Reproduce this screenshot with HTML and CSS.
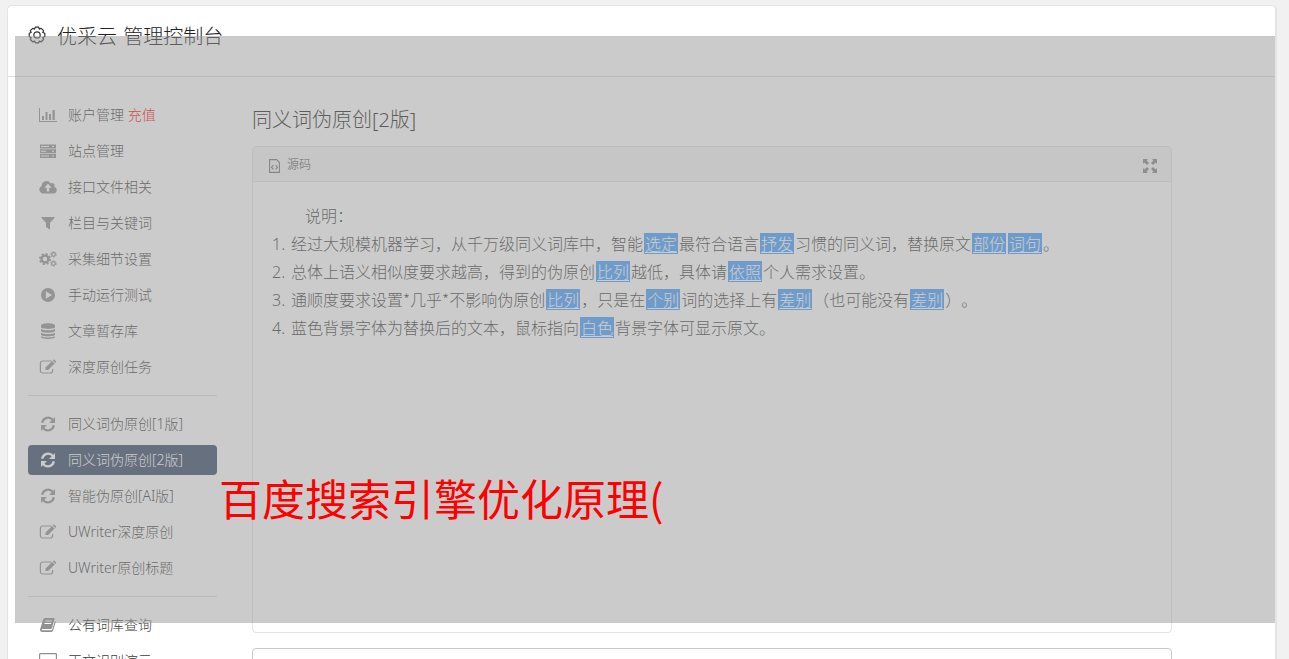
FILE: index.html
```
<!DOCTYPE html>
<html lang="zh-CN">
<head>
    <meta charset="UTF-8">
    <meta name="viewport" content="width=device-width, initial-scale=1.0">
    <title>优采云 管理控制台</title>
    <link rel="stylesheet" href="styles.css">
</head>
<body>

    <!-- shared icons -->
    <svg class="icon-defs">
        <symbol id="i-refresh" viewBox="0 0 16 16">
            <path d="M2.2 6.8A6 6 0 0 1 12.8 4M13.8 9.2A6 6 0 0 1 3.2 12" fill="none" stroke="currentColor" stroke-width="2.3"/>
            <path d="M15 1v6H9zM1 15V9h6z"/>
        </symbol>
        <symbol id="i-edit" viewBox="0 0 18 16">
            <path d="M12.5 2H3.6A2.2 2.2 0 0 0 1.4 4.200v7.600A2.200 2.200 0 0 0 3.600 14h7.800a2.200 2.200 0 0 0 2.200-2.200V10" fill="none" stroke="currentColor" stroke-width="1.200"/>
            <path d="M6.500 8.500l6.600-6.600 2.600 2.600-6.600 6.600H6.500zM13.800 1.200l.6-.5q.6-.4 1.100.1l1.400 1.400q.5.500 0 1.100l-.6.600z"/>
        </symbol>
    </svg>

    <div class="wrapper">
        <div class="header">
            <svg class="logo" viewBox="0 0 20 20">
                <path d="M8.300 1.200h3.400l.6 1.900 1.900-.8 2.400 2.400-.9 1.800 2.100.8v3.400l-2.100.8.9 2-2.400 2.400-1.900-.9-.6 1.900H8.300L7.600 15l-1.900.9-2.400-2.400.9-2-2-.8V7.300l2-.8-.9-1.800 2.400-2.400 1.900.8z"/>
                <circle cx="10" cy="9" r="3.200"/>
            </svg>
            <h1>优采云 管理控制台</h1>
        </div>

        <div class="main">
            <div class="sidebar">
                <a class="item" href="#">
                    <svg class="icon" viewBox="0 0 18 16"><path d="M0 1h1v13h17v1H0zM3 9h2v4H3zM6.500 5h2v8h-2zM10 7h2v6h-2zM13.500 3h2.300v10h-2.300z"/></svg>
                    <span>账户管理 <b>充值</b></span>
                </a>
                <a class="item" href="#">
                    <svg class="icon" viewBox="0 0 18 16"><path fill-rule="evenodd" d="M1 1.500h16v4H1zM2 3v1h8V3zM13 3v1h2V3zM1 6.300h16v4H1zM2 7.800v1h5v-1zM13 7.800v1h2v-1zM1 11.100h16v4H1zM2 12.600v1h8v-1zM13 12.600v1h2v-1z"/></svg>
                    <span>站点管理</span>
                </a>
                <a class="item" href="#">
                    <svg class="icon" viewBox="0 0 18 16"><path fill-rule="evenodd" d="M4.300 14.500A4 4 0 0 1 2.600 6.900 4.900 4.900 0 0 1 11.700 4.500 2.600 2.600 0 0 1 15.400 7.700 3.500 3.500 0 0 1 14.300 14.500zM9 4.800L5.300 8.700h2.500v3.700h2.400V8.700h2.500z"/></svg>
                    <span>接口文件相关</span>
                </a>
                <a class="item" href="#">
                    <svg class="icon" viewBox="0 0 18 16"><path d="M2.700 2h12.600q.8.200.2 1L11 7.800V14.700L7 12V7.800L2.500 3q-.6-.8.200-1z"/></svg>
                    <span>栏目与关键词</span>
                </a>
                <a class="item" href="#">
                    <svg class="icon" viewBox="0 0 18 16">
                        <g fill="none" stroke="currentColor">
                            <circle cx="6" cy="8" r="3.400" stroke-width="2.400"/>
                            <circle cx="6" cy="8" r="5.100" stroke-width="1.800" stroke-dasharray="2.100 1.905"/>
                            <circle cx="14.500" cy="3.500" r="1.800" stroke-width="1.200"/>
                            <circle cx="14.500" cy="3.500" r="2.700" stroke-width="1" stroke-dasharray="1.400 1.427"/>
                            <circle cx="14.500" cy="12.500" r="1.800" stroke-width="1.200"/>
                            <circle cx="14.500" cy="12.500" r="2.700" stroke-width="1" stroke-dasharray="1.400 1.427"/>
                        </g>
                    </svg>
                    <span>采集细节设置</span>
                </a>
                <a class="item" href="#">
                    <svg class="icon" viewBox="0 0 18 16"><path fill-rule="evenodd" d="M9 1a7 7 0 1 1 0 14A7 7 0 1 1 9 1zM6.800 4.300v7.400L13 8z"/></svg>
                    <span>手动运行测试</span>
                </a>
                <a class="item" href="#">
                    <svg class="icon" viewBox="0 0 18 16"><path d="M2 2.500C2-.5 16-.5 16 2.500V4C16 6.500 2 6.500 2 4zM2 6c2.500 1.800 11.500 1.800 14 0v2C15 10.200 3 10.200 2 8zM2 9.700c2.500 1.800 11.500 1.800 14 0v2c-1 2.200-13 2.200-14 0zM2 13.200c2.500 1.600 11.500 1.600 14 0v1c-1 2.300-13 2.300-14 0z"/></svg>
                    <span>文章暂存库</span>
                </a>
                <a class="item" href="#">
                    <svg class="icon"><use href="#i-edit"/></svg>
                    <span>深度原创任务</span>
                </a>
                <div class="divider"></div>
                <a class="item" href="#">
                    <svg class="icon"><use href="#i-refresh"/></svg>
                    <span>同义词伪原创[1版]</span>
                </a>
                <a class="item active" href="#">
                    <svg class="icon"><use href="#i-refresh"/></svg>
                    <span>同义词伪原创[2版]</span>
                </a>
                <a class="item" href="#">
                    <svg class="icon"><use href="#i-refresh"/></svg>
                    <span>智能伪原创[AI版]</span>
                </a>
                <a class="item" href="#">
                    <svg class="icon"><use href="#i-edit"/></svg>
                    <span>UWriter深度原创</span>
                </a>
                <a class="item" href="#">
                    <svg class="icon"><use href="#i-edit"/></svg>
                    <span>UWriter原创标题</span>
                </a>
                <div class="divider"></div>
                <a class="item" href="#">
                    <svg class="icon" viewBox="0 0 18 16"><path fill-rule="evenodd" d="M6 1h8.500q1.300 0 1 1.200L13 11q-.3 1-1.400 1H3.500q-1 .1-.8.800.2.500 1 .5h8.500q.8 0 1-.8L16 4q.9.400.6 1.400l-2.500 8.200q-.4 1.400-1.700 1.400H3.500Q1 15 1 12.500L4 2.700Q4.500 1 6 1zM6.500 3.500l-.3 1h6.600l.3-1zM5.700 6l-.3 1H12l.3-1z"/></svg>
                    <span>公有词库查询</span>
                </a>
                <a class="item" href="#">
                    <svg class="icon" viewBox="0 0 18 16"><path d="M1.500 .700h15a1 1 0 0 1 1 1v10H.500v-10a1 1 0 0 1 1-1zM7 12v2.500h4V12" fill="none" stroke="currentColor" stroke-width="1.300"/></svg>
                    <span>正文识别演示</span>
                </a>
            </div>

            <div class="content">
                <h2>同义词伪原创[2版]</h2>
                <div class="panel">
                    <div class="panel-head">
                        <svg class="source-icon" viewBox="0 0 11 14">
                            <path d="M.6.600h7l2.800 2.900v9.900H.6zM4.500 6L2.500 8.200l2 2.200M6.500 6l2 2.200-2 2.200"/>
                        </svg>
                        <span>源码</span>
                        <svg class="expand-icon" viewBox="0 0 14 14"><path d="M0 0h5L3.600 1.400 6 3.900 3.900 6 1.400 3.600 0 5zM14 0v5l-1.400-1.400L10.100 6 8 3.900l2.400-2.500L9 0zM0 14V9l1.400 1.400L3.900 8 6 10.100l-2.400 2.500L5 14zM14 14H9l1.400-1.400L8 10.100 10.100 8l2.500 2.400L14 9z"/></svg>
                    </div>
                    <div class="editor">
                        <p class="intro">说明：</p>
                        <p><i>1.</i>经过大规模机器学习，从千万级同义词库中，智能<u>选定</u>最符合语言<u>抒发</u>习惯的同义词，替换原文<u>部份</u><u>词句</u>。</p>
                        <p><i>2.</i>总体上语义相似度要求越高，得到的伪原创<u>比列</u>越低，具体请<u>依照</u>个人需求设置。</p>
                        <p><i>3.</i>通顺度要求设置*几乎*不影响伪原创<u>比列</u>，只是在<u>个别</u>词的选择上有<u>差别</u>（也可能没有<u>差别</u>）。</p>
                        <p><i>4.</i>蓝色背景字体为替换后的文本，鼠标指向<u>白色</u>背景字体可显示原文。</p>
                    </div>
                </div>
                <div class="next-box"></div>
            </div>
        </div>
    </div>

    <div class="mask"></div>
    <div class="caption">百度搜索引擎优化原理(</div>

</body>
</html>
```

FILE: styles.css
```
* {
    box-sizing: border-box;
}

body {
    margin: 0;
    height: 659px;
    padding: 5px 12px 0 7px;
    overflow: hidden;
    background-color: #f1f1f1;
    font-family: "Noto Sans", "Noto Sans CJK SC", sans-serif;
    font-weight: 300;
    font-size: 14px;
    color: #3c3c3c;
    text-spacing-trim: space-all;
}

.icon-defs {
    display: none;
}

.wrapper {
    height: 654px;
    overflow: hidden;
    background-color: #fff;
    border: 1px solid #e4e4e4;
    border-right-width: 2px;
    border-bottom: none;
    border-radius: 5px 5px 0 0;
}

.header {
    height: 71px;
    display: flex;
    align-items: flex-start;
    padding: 15px 0 0 19px;
    border-bottom: 1px solid #ddd;
    color: #333;
}

.logo {
    width: 20px;
    height: 20px;
    margin: 5px 10px 0 0;
    fill: none;
    stroke: #333;
    stroke-width: 1.2;
    stroke-linejoin: round;
}

.header h1 {
    margin: 0;
    font-size: 20px;
    line-height: 32px;
    font-weight: 300;
    word-spacing: 1px;
    color: #222;
}

.main {
    display: flex;
    gap: 35px;
    padding-left: 20px;
}

.sidebar {
    width: 189px;
    padding-top: 23px;
}

.item {
    display: flex;
    align-items: center;
    height: 30px;
    margin-bottom: 6px;
    padding-left: 11px;
    border-radius: 4px;
    line-height: 20px;
    color: #3c3c3c;
    text-decoration: none;
    white-space: nowrap;
}

.item b {
    font-weight: 300;
    color: #f00;
}

.item.active,
.item.active .icon {
    color: #fff;
}

.item.active {
    background-color: #354967;
}

.icon {
    width: 18px;
    height: 16px;
    margin-right: 11px;
    color: #919191;
    fill: currentColor;
}

.divider {
    height: 1px;
    margin: 13px 0;
    background-color: #ddd;
}

.content {
    width: 920px;
    padding-top: 27px;
}

.content h2 {
    margin: 0;
    height: 42px;
    font-size: 20px;
    line-height: 32px;
    font-weight: 300;
    color: #222;
}

.panel {
    height: 487px;
    border: 1px solid #e3e3e3;
    border-radius: 4px;
}

.panel-head {
    display: flex;
    align-items: center;
    height: 35px;
    padding: 0 14px 0 16px;
    background-color: #f5f5f5;
    border-bottom: 1px solid #e3e3e3;
    font-size: 12px;
    line-height: 18px;
}

.panel-head span {
    padding-top: 2px;
}

.source-icon {
    width: 11px;
    height: 14px;
    margin: 4px 7px 0 0;
    fill: none;
    stroke: #757575;
    stroke-width: 1.1;
}

.expand-icon {
    width: 14px;
    height: 14px;
    margin: 4px 0 0 auto;
    fill: #858585;
}

.editor {
    padding: 19px 19px;
    font-family: "Noto Sans CJK SC", sans-serif;
    font-size: 16px;
    line-height: 28px;
    white-space: nowrap;
}

.editor p {
    display: flow-root;
    height: 28px;
    margin: 0;
}

.editor .intro {
    padding-left: 33px;
}

.editor i {
    display: inline-block;
    width: 19px;
    font-family: "Noto Sans", sans-serif;
    font-style: normal;
    line-height: 20px;
}

/* replaced words */
.editor u {
    display: inline-block;
    height: 21px;
    margin: 0 1px;
    padding: 0 1px;
    line-height: 21px;
    background-color: #479ffd;
    color: #fff;
    text-underline-offset: 2px;
    text-decoration-thickness: 1px;
}

.next-box {
    height: 60px;
    margin-top: 15px;
    border: 1px solid #c8c8c8;
    border-radius: 4px;
}

/* translucent layer over the page */
.mask {
    position: absolute;
    left: 15px;
    top: 36px;
    width: 1260px;
    height: 587px;
    background-color: rgba(151, 151, 151, 0.5);
}

.caption {
    position: absolute;
    left: 219px;
    top: 465px;
    font-family: "Noto Sans CJK SC", sans-serif;
    font-size: 43px;
    line-height: 64px;
    font-weight: 400;
    color: #f00;
    white-space: nowrap;
}
```
